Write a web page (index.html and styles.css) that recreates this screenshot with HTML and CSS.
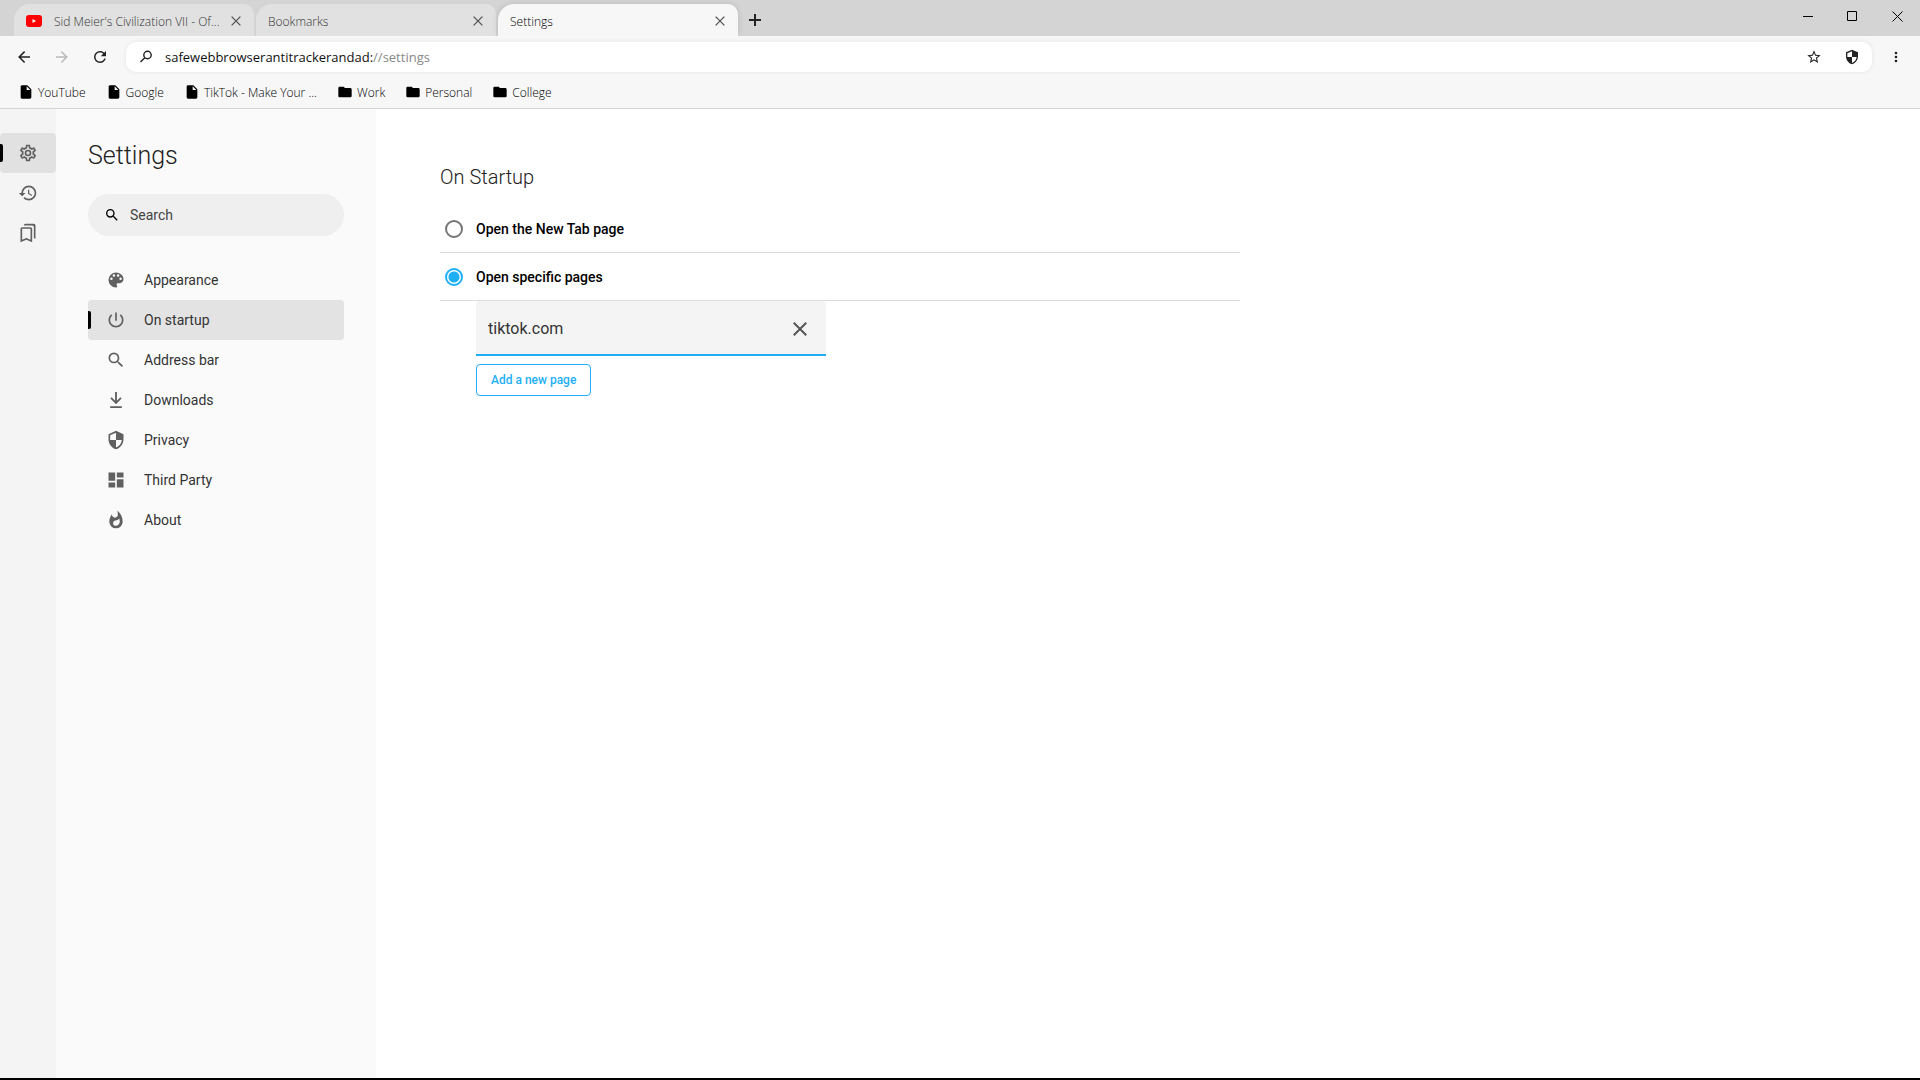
FILE: index.html
```html
<!DOCTYPE html>
<html lang="en">
<head>
  <meta charset="UTF-8" />
  <meta name="viewport" content="width=device-width, initial-scale=1.0"/>
  <title>Settings</title>
  <link rel="stylesheet" href="styles.css">
</head>
<body>
  <svg class="sprite" aria-hidden="true">
    <symbol id="i-close" viewBox="0 0 24 24"><path d="M4.5 4.5l15 15M19.5 4.5l-15 15" fill="none" stroke="currentColor" stroke-width="2.4"/></symbol>
    <symbol id="i-back" viewBox="0 0 24 24"><path d="M20,11V13H8L13.5,18.5L12.08,19.92L4.16,12L12.08,4.08L13.5,5.5L8,11H20Z"/></symbol>
    <symbol id="i-forward" viewBox="0 0 24 24"><path d="M4,11V13H16L10.5,18.5L11.92,19.92L19.84,12L11.92,4.08L10.5,5.5L16,11H4Z"/></symbol>
    <symbol id="i-refresh" viewBox="0 0 24 24"><path d="M17.65,6.35C16.2,4.9 14.21,4 12,4A8,8 0 0,0 4,12A8,8 0 0,0 12,20C15.73,20 18.84,17.45 19.73,14H17.65C16.83,16.33 14.61,18 12,18A6,6 0 0,1 6,12A6,6 0 0,1 12,6C13.66,6 15.14,6.69 16.22,7.78L13,11H20V4L17.65,6.35Z"/></symbol>
    <symbol id="i-search" viewBox="0 0 24 24"><path d="M9.5,3A6.5,6.5 0 0,1 16,9.5C16,11.11 15.41,12.59 14.44,13.73L14.71,14H15.5L20.5,19L19,20.5L14,15.5V14.71L13.73,14.44C12.59,15.41 11.11,16 9.5,16A6.5,6.5 0 0,1 3,9.5A6.5,6.5 0 0,1 9.5,3M9.5,5C7,5 5,7 5,9.5C5,12 7,14 9.5,14C12,14 14,12 14,9.5C14,7 12,5 9.5,5Z"/></symbol>
    <symbol id="i-star" viewBox="0 0 24 24"><path d="M12,15.39L8.24,17.66L9.23,13.38L5.91,10.5L10.29,10.13L12,6.09L13.71,10.13L18.09,10.5L14.77,13.38L15.76,17.66M22,9.24L14.81,8.63L12,2L9.19,8.63L2,9.24L7.45,13.97L5.82,21L12,17.27L18.18,21L16.54,13.97L22,9.24Z"/></symbol>
    <symbol id="i-shield" viewBox="0 0 24 24"><path d="M12,12H19C18.47,16.11 15.72,19.78 12,20.92V12H5V6.3L12,3.19M12,1L3,5V11C3,16.55 6.84,21.73 12,23C17.16,21.73 21,16.55 21,11V5L12,1Z"/></symbol>
    <symbol id="i-dots" viewBox="0 0 24 24"><path d="M12,16A2,2 0 0,1 14,18A2,2 0 0,1 12,20A2,2 0 0,1 10,18A2,2 0 0,1 12,16M12,10A2,2 0 0,1 14,12A2,2 0 0,1 12,14A2,2 0 0,1 10,12A2,2 0 0,1 12,10M12,4A2,2 0 0,1 14,6A2,2 0 0,1 12,8A2,2 0 0,1 10,6A2,2 0 0,1 12,4Z"/></symbol>
    <symbol id="i-file" viewBox="0 0 24 24"><path d="M13,9V3.5L18.5,9M6,2C4.89,2 4,2.89 4,4V20A2,2 0 0,0 6,22H18A2,2 0 0,0 20,20V8L14,2H6Z"/></symbol>
    <symbol id="i-folder" viewBox="0 0 24 24"><path d="M10,4H4C2.89,4 2,4.89 2,6V18A2,2 0 0,0 4,20H20A2,2 0 0,0 22,18V8C22,6.89 21.1,6 20,6H12L10,4Z"/></symbol>
    <symbol id="i-cog" viewBox="0 0 24 24"><path d="M12,8A4,4 0 0,1 16,12A4,4 0 0,1 12,16A4,4 0 0,1 8,12A4,4 0 0,1 12,8M12,10A2,2 0 0,0 10,12A2,2 0 0,0 12,14A2,2 0 0,0 14,12A2,2 0 0,0 12,10M10,22C9.75,22 9.54,21.82 9.5,21.58L9.13,18.93C8.5,18.68 7.96,18.34 7.44,17.94L4.95,18.95C4.73,19.03 4.46,18.95 4.34,18.73L2.34,15.27C2.21,15.05 2.27,14.78 2.46,14.63L4.57,12.97L4.5,12L4.57,11L2.46,9.37C2.27,9.22 2.21,8.95 2.34,8.73L4.34,5.27C4.46,5.05 4.73,4.96 4.95,5.05L7.44,6.05C7.96,5.66 8.5,5.32 9.13,5.07L9.5,2.42C9.54,2.18 9.75,2 10,2H14C14.25,2 14.46,2.18 14.5,2.42L14.87,5.07C15.5,5.32 16.04,5.66 16.56,6.05L19.05,5.05C19.27,4.96 19.54,5.05 19.66,5.27L21.66,8.73C21.79,8.95 21.73,9.22 21.54,9.37L19.43,11L19.5,12L19.43,13L21.54,14.63C21.73,14.78 21.79,15.05 21.66,15.27L19.66,18.73C19.54,18.95 19.27,19.04 19.05,18.95L16.56,17.95C16.04,18.34 15.5,18.68 14.87,18.93L14.5,21.58C14.46,21.82 14.25,22 14,22H10M11.25,4L10.88,6.61C9.68,6.86 8.62,7.5 7.85,8.39L5.44,7.35L4.69,8.65L6.8,10.2C6.4,11.37 6.4,12.64 6.8,13.8L4.68,15.36L5.43,16.66L7.86,15.62C8.63,16.5 9.68,17.14 10.87,17.38L11.24,20H12.76L13.13,17.39C14.32,17.14 15.37,16.5 16.14,15.62L18.57,16.66L19.32,15.36L17.2,13.81C17.6,12.64 17.6,11.37 17.2,10.2L19.31,8.65L18.56,7.35L16.15,8.39C15.38,7.5 14.32,6.86 13.12,6.62L12.75,4H11.25Z"/></symbol>
    <symbol id="i-history" viewBox="0 0 24 24"><path d="M13,3A9,9 0 0,0 4,12H1L4.89,15.89L4.96,16.03L9,12H6A7,7 0 0,1 13,5A7,7 0 0,1 20,12A7,7 0 0,1 13,19C11.07,19 9.32,18.21 8.06,16.94L6.64,18.36C8.27,20 10.5,21 13,21A9,9 0 0,0 22,12A9,9 0 0,0 13,3M12,8V13L16.28,15.54L17,14.33L13.5,12.25V8H12Z"/></symbol>
    <symbol id="i-bookmarks" viewBox="0 0 24 24"><path d="M15 7v12.97l-4.21-1.81-.79-.34-.79.34L5 19.97V7h10m4-6H8.99C7.89 1 7 1.9 7 3h10c1.1 0 2 .9 2 2v13l2 1V3c0-1.1-.9-2-2-2zm-4 4H5c-1.1 0-2 .9-2 2v16l7-3 7 3V7c0-1.1-.9-2-2-2z"/></symbol>
    <symbol id="i-palette" viewBox="0 0 24 24"><path d="M17.5,12A1.5,1.5 0 0,1 16,10.5A1.5,1.5 0 0,1 17.5,9A1.5,1.5 0 0,1 19,10.5A1.5,1.5 0 0,1 17.5,12M14.5,8A1.5,1.5 0 0,1 13,6.5A1.5,1.5 0 0,1 14.5,5A1.5,1.5 0 0,1 16,6.5A1.5,1.5 0 0,1 14.5,8M9.5,8A1.5,1.5 0 0,1 8,6.5A1.5,1.5 0 0,1 9.5,5A1.5,1.5 0 0,1 11,6.5A1.5,1.5 0 0,1 9.5,8M6.5,12A1.5,1.5 0 0,1 5,10.5A1.5,1.5 0 0,1 6.5,9A1.5,1.5 0 0,1 8,10.5A1.5,1.5 0 0,1 6.5,12M12,3A9,9 0 0,0 3,12A9,9 0 0,0 12,21A1.5,1.5 0 0,0 13.5,19.5C13.5,19.11 13.35,18.76 13.11,18.5C12.88,18.23 12.73,17.88 12.73,17.5A1.5,1.5 0 0,1 14.23,16H16A5,5 0 0,0 21,11C21,6.58 16.97,3 12,3Z"/></symbol>
    <symbol id="i-power" viewBox="0 0 24 24"><path d="M13 3h-2v10h2V3zm4.83 2.17l-1.42 1.42C17.99 7.86 19 9.81 19 12c0 3.87-3.13 7-7 7s-7-3.13-7-7c0-2.19 1.01-4.14 2.58-5.42L6.17 5.17C4.23 6.82 3 9.26 3 12c0 4.97 4.03 9 9 9s9-4.03 9-9c0-2.74-1.23-5.18-3.17-6.83z"/></symbol>
    <symbol id="i-download" viewBox="0 0 24 24"><path d="M12 2.5V15M6 9.5l6 6 6-6M5 20.5h14" fill="none" stroke="currentColor" stroke-width="2.2"/></symbol>
    <symbol id="i-dashboard" viewBox="0 0 24 24"><path d="M13,3V9H21V3M13,21H21V11H13M3,21H11V15H3M3,13H11V3H3V13Z"/></symbol>
    <symbol id="i-fire" viewBox="0 0 24 24"><path d="M11.71,19C9.93,19 8.5,17.59 8.5,15.86C8.5,14.24 9.53,13.1 11.3,12.74C13.07,12.38 14.9,11.53 15.92,10.16C16.31,11.45 16.5,12.81 16.5,14.2C16.5,16.84 14.36,19 11.71,19M13.5,0.67C13.5,0.67 14.24,3.32 14.24,5.47C14.24,7.53 12.89,9.2 10.83,9.2C8.76,9.2 7.2,7.53 7.2,5.47L7.23,5.1C5.21,7.5 4,10.61 4,14A8,8 0 0,0 12,22A8,8 0 0,0 20,14C20,8.6 17.41,3.8 13.5,0.67Z"/></symbol>
  </svg>

  <header class="browser">
    <div class="titlebar">
      <div class="tabs">
        <div class="tab">
          <svg class="favicon" viewBox="0 0 16 12"><rect width="16" height="12" rx="3" fill="#f00"/><path d="M6.5 4v4L10 6z" fill="#fff"/></svg>
          <span class="tab-title">Sid Meier's Civilization VII - Of...</span>
          <button class="tab-close" aria-label="Close tab"><svg><use href="#i-close"/></svg></button>
        </div>
        <div class="tab">
          <span class="tab-title">Bookmarks</span>
          <button class="tab-close" aria-label="Close tab"><svg><use href="#i-close"/></svg></button>
        </div>
        <div class="tab active">
          <span class="tab-title">Settings</span>
          <button class="tab-close" aria-label="Close tab"><svg><use href="#i-close"/></svg></button>
        </div>
        <button class="new-tab" aria-label="New tab"><svg viewBox="0 0 12 12"><path d="M6 0v12M0 6h12" stroke="currentColor" stroke-width="2"/></svg></button>
      </div>
      <div class="window-controls">
        <button aria-label="Minimize"><svg viewBox="0 0 11 11"><path d="M1 5.5h10" stroke="#000"/></svg></button>
        <button aria-label="Maximize"><svg viewBox="0 0 11 11"><path d="M.5 .5h9v9h-9z" fill="none" stroke="#000"/></svg></button>
        <button aria-label="Close"><svg viewBox="0 0 11 11"><path d="M.5 .5l10 10M10.5 .5l-10 10" stroke="#000"/></svg></button>
      </div>
    </div>

    <div class="toolbar">
      <button class="tool" aria-label="Back"><svg><use href="#i-back"/></svg></button>
      <button class="tool" aria-label="Forward" disabled><svg><use href="#i-forward"/></svg></button>
      <button class="tool" aria-label="Reload"><svg><use href="#i-refresh"/></svg></button>
      <div class="addressbar">
        <svg class="lens" viewBox="0 0 16 16"><circle cx="9.5" cy="6" r="3.7" fill="none" stroke="currentColor" stroke-width="1.4"/><path d="M6.8 8.7L2.5 13" stroke="currentColor" stroke-width="1.4"/></svg>
        <div class="url" role="textbox" aria-label="Address" contenteditable="true" spellcheck="false">safewebbrowserantitrackerandad:<span>//settings</span></div>
        <button class="tool" aria-label="Bookmark this page"><svg><use href="#i-star"/></svg></button>
        <button class="tool" aria-label="Protection"><svg><use href="#i-shield"/></svg></button>
      </div>
      <button class="tool menu" aria-label="Menu"><svg><use href="#i-dots"/></svg></button>
    </div>

    <nav class="bookmarks">
      <a href="#"><svg><use href="#i-file"/></svg>YouTube</a>
      <a href="#"><svg><use href="#i-file"/></svg>Google</a>
      <a href="#"><svg><use href="#i-file"/></svg>TikTok - Make Your ...</a>
      <a href="#"><svg><use href="#i-folder"/></svg>Work</a>
      <a href="#"><svg><use href="#i-folder"/></svg>Personal</a>
      <a href="#"><svg><use href="#i-folder"/></svg>College</a>
    </nav>
  </header>

  <div class="page">
    <nav class="rail">
      <a href="#" class="selected" aria-label="Settings"><svg><use href="#i-cog"/></svg></a>
      <a href="#" aria-label="History"><svg><use href="#i-history"/></svg></a>
      <a href="#" aria-label="Bookmarks"><svg><use href="#i-bookmarks"/></svg></a>
    </nav>

    <aside class="sidebar">
      <h1>Settings</h1>
      <label class="search">
        <svg><use href="#i-search"/></svg>
        <input type="text" placeholder="Search" aria-label="Search">
      </label>
      <nav class="sections">
        <a href="#"><svg><use href="#i-palette"/></svg>Appearance</a>
        <a href="#" class="selected"><svg><use href="#i-power"/></svg>On startup</a>
        <a href="#"><svg><use href="#i-search"/></svg>Address bar</a>
        <a href="#"><svg><use href="#i-download"/></svg>Downloads</a>
        <a href="#"><svg><use href="#i-shield"/></svg>Privacy</a>
        <a href="#"><svg><use href="#i-dashboard"/></svg>Third Party</a>
        <a href="#"><svg><use href="#i-fire"/></svg>About</a>
      </nav>
    </aside>

    <main class="content">
      <h2>On Startup</h2>
      <label class="option"><input type="radio" name="startup">Open the New Tab page</label>
      <label class="option"><input type="radio" name="startup" checked>Open specific pages</label>
      <div class="pages">
        <div class="field">
          <input type="text" value="tiktok.com" aria-label="Page address">
          <button aria-label="Remove page"><svg><use href="#i-close"/></svg></button>
        </div>
        <button class="add-page">Add a new page</button>
      </div>
    </main>
  </div>
</body>
</html>
```
FILE: styles.css
```css
* {
  box-sizing: border-box;
}
body {
  margin: 0;
  min-height: 100vh;
  display: flex;
  flex-direction: column;
  font-family: Roboto, sans-serif;
  font-size: 14px;
  background: #fff;
  color: #333;
  border-bottom: 2px solid #000;
}
svg {
  display: block;
  flex: none;
  width: 20px;
  height: 20px;
  fill: currentColor;
}
.sprite {
  display: none;
}
a {
  color: inherit;
  text-decoration: none;
}
button {
  display: flex;
  align-items: center;
  justify-content: center;
  padding: 0;
  border: 0;
  background: none;
  color: inherit;
  font-family: inherit;
}
input {
  font-family: inherit;
  color: inherit;
}

/* browser chrome */
.browser {
  font-family: "Open Sans", sans-serif;
  font-size: 12px;
  background: #f7f7f7;
  border-bottom: 1px solid #d4d4d4;
}
.titlebar {
  display: flex;
  justify-content: space-between;
  height: 36px;
  background: #d4d4d4;
}
.tabs {
  display: flex;
  gap: 2px;
  padding: 4px 0 0 14px;
}
.tab {
  display: flex;
  align-items: center;
  width: 240px;
  padding: 2px 8px 0 12px;
  border-radius: 16px 10px 0 0;
  background: #e1e1e1;
  color: #333;
  font-weight: 300;
}
.tab.active {
  background: #f7f7f7;
  color: #000;
  box-shadow: 0 0 6px rgba(0, 0, 0, 0.12);
  clip-path: inset(-4px -8px 0 -8px);
}
.favicon {
  width: 16px;
  height: 12px;
  margin-right: 12px;
}
.tab-title {
  flex: 1;
  min-width: 0;
  white-space: nowrap;
  overflow: hidden;
}
.tab-close {
  width: 20px;
  height: 20px;
  color: #555;
}
.tab-close svg {
  width: 14px;
  height: 14px;
}
.new-tab {
  width: 30px;
  color: #222;
}
.new-tab svg {
  width: 12px;
  height: 12px;
}
.window-controls {
  display: flex;
}
.window-controls button {
  width: 45px;
  height: 32px;
}
.window-controls svg {
  width: 11px;
  height: 11px;
}
.toolbar {
  display: flex;
  align-items: center;
  height: 42px;
  padding-left: 5px;
}
.tool {
  width: 38px;
  height: 30px;
  color: #222;
}
.tool svg {
  width: 18px;
  height: 18px;
}
.tool:disabled {
  color: #bbb;
}
.addressbar {
  flex: 1;
  display: flex;
  align-items: center;
  height: 30px;
  margin-left: 7px;
  padding: 0 1px 0 12px;
  border-radius: 10px;
  background: #fff;
  box-shadow: 0 0 5px rgba(0, 0, 0, 0.08);
}
.addressbar .tool svg {
  width: 16px;
  height: 16px;
}
.lens {
  width: 16px;
  height: 16px;
  color: #222;
}
.url {
  flex: 1;
  margin-left: 11px;
  font-size: 13px;
  color: #111;
  white-space: nowrap;
  outline: none;
}
.url span {
  color: #888;
}
.menu {
  width: 48px;
}
.menu svg {
  width: 16px;
  height: 16px;
}
.bookmarks {
  display: flex;
  gap: 20px;
  height: 30px;
  padding: 0 18px 2px;
  color: #000;
  font-weight: 300;
}
.bookmarks a {
  display: flex;
  align-items: center;
  gap: 4px;
  white-space: nowrap;
}
.bookmarks svg {
  width: 16px;
  height: 16px;
  color: #000;
}

/* settings page */
.page {
  flex: 1;
  display: flex;
}
.rail {
  width: 56px;
  padding-top: 24px;
  background: #f4f4f4;
  color: #606060;
}
.rail a {
  display: flex;
  align-items: center;
  justify-content: center;
  height: 40px;
  border-radius: 4px;
}
.selected {
  position: relative;
}
.selected::before {
  content: "";
  position: absolute;
  left: 0;
  top: 11px;
  width: 3px;
  height: 18px;
  background: #000;
  border-radius: 0 2px 2px 0;
}
.rail .selected {
  background: #e1e1e1;
}
.sidebar {
  width: 320px;
  padding: 32px;
  background: #fafafa;
}
h1 {
  margin: 0 0 23px;
  font-size: 25px;
  line-height: 30px;
  font-weight: 300;
  color: #222;
}
.search {
  display: flex;
  align-items: center;
  height: 42px;
  margin-bottom: 24px;
  padding: 0 16px;
  border-radius: 21px;
  background: #efefef;
}
.search svg {
  width: 16px;
  height: 16px;
  color: #000;
}
.search input {
  width: 100%;
  margin-left: 10px;
  padding: 0;
  border: 0;
  background: none;
  font-size: 14px;
  outline: none;
}
.search input::placeholder {
  color: #444;
}
.sections a {
  display: flex;
  align-items: center;
  gap: 18px;
  height: 40px;
  padding-left: 18px;
  border-radius: 4px;
  color: #333;
}
.sections svg {
  color: #606060;
}
.sections .selected {
  background: #e3e3e3;
}
.content {
  flex: 1;
  padding: 56px 64px;
}
h2 {
  margin: 0 0 16px;
  font-size: 20px;
  line-height: 24px;
  font-weight: 300;
  color: #222;
}
.option {
  display: flex;
  align-items: center;
  gap: 13px;
  max-width: 800px;
  height: 48px;
  padding-left: 5px;
  border-bottom: 1px solid #dcdcdc;
  font-weight: 500;
  color: #000;
}
.option input {
  appearance: none;
  width: 18px;
  height: 18px;
  margin: 0;
  border: 2px solid #757575;
  border-radius: 50%;
}
.option input:checked {
  border-color: #1eaff6;
  background: radial-gradient(circle, #1eaff6 5px, transparent 6px);
}
.pages {
  padding-left: 36px;
}
.field {
  display: flex;
  align-items: center;
  max-width: 350px;
  height: 55px;
  margin-bottom: 8px;
  padding: 2px 14px 0 12px;
  border-bottom: 2px solid #1eaff6;
  border-radius: 4px 4px 0 0;
  background: #f4f4f4;
}
.field input {
  flex: 1;
  min-width: 0;
  padding: 0;
  border: 0;
  background: none;
  font-size: 16px;
  outline: none;
}
.field button {
  width: 24px;
  height: 24px;
  color: #555;
}
.add-page {
  height: 32px;
  padding: 0 14px;
  border: 1px solid #1eaff6;
  border-radius: 4px;
  color: #1eaff6;
  font-size: 12px;
  font-weight: 500;
}
```
